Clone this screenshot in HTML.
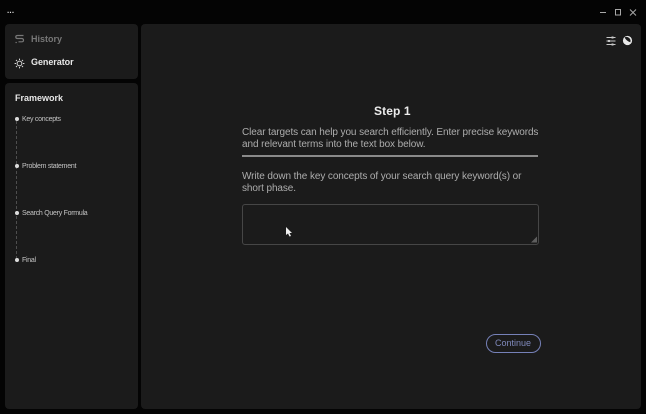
<!DOCTYPE html>
<html>
<head>
<meta charset="utf-8">
<style>
html{margin:0;padding:0;width:646px;height:414px;overflow:hidden;background:#040404;}
body{margin:0;padding:0;width:646px;height:414px;overflow:hidden;background:#040404;font-family:"Liberation Sans",sans-serif;filter:blur(0.3px);}
div,svg,span{position:absolute;}
.card{background:#1b1b1b;border-radius:4px;}
.t{white-space:nowrap;line-height:1;}
.step{color:#c4c4c4;font-size:7px;left:22px;letter-spacing:-0.27px;}
.dot{left:14.5px;width:4px;height:4px;border-radius:50%;background:#dcdcdc;}
.body{color:#adadad;font-size:10px;left:242px;letter-spacing:-0.09px;line-height:12px;height:12px;}
</style>
</head>
<body>
<div class="t" style="left:7px;top:7px;color:#ddd;font-size:8px;font-weight:bold;letter-spacing:0.2px;">...</div>

<svg style="left:596px;top:6px" width="44" height="14" viewBox="0 0 44 14" fill="none" stroke="#a8a8a8" stroke-width="1">
<path d="M4 6.5H10"/>
<rect x="19.5" y="3.5" width="5" height="5.5"/>
<path d="M34 3.5L40 9.5M40 3.5L34 9.5"/>
</svg>

<div class="card" style="left:5px;top:24px;width:133px;height:55px;"></div>
<div class="card" style="left:5px;top:83px;width:133px;height:326px;"></div>
<div class="card" style="left:141px;top:24px;width:500px;height:385px;"></div>

<svg style="left:14px;top:34px" width="11" height="11" viewBox="0 0 11 11" fill="none" stroke="#777" stroke-width="1.2">
<path d="M9.5 1.5H3.5Q1.8 1.5 1.8 3Q1.8 4.5 3.5 4.5H7.5Q9.5 4.5 9.5 6.2Q9.5 7.8 7.5 7.8H4.5"/>
<path d="M1.5 8.5H2.8"/>
</svg>
<div class="t" style="left:31px;top:35px;color:#777;font-size:9px;font-weight:bold;">History</div>

<svg style="left:14px;top:58px" width="11" height="11" viewBox="0 0 11 11" fill="none" stroke="#d8d8d8" stroke-width="1">
<circle cx="5.5" cy="5.5" r="2.4"/>
<path d="M5.5 .6V2M5.5 9V10.4M.6 5.5H2M9 5.5H10.4M2 2L3 3M8 8L9 9M9 2L8 3M3 8L2 9"/>
</svg>
<div class="t" style="left:31px;top:58px;color:#e8e8e8;font-size:9px;font-weight:bold;letter-spacing:-0.05px;">Generator</div>

<div class="t" style="left:15px;top:94px;color:#e8e8e8;font-size:9px;font-weight:bold;">Framework</div>

<div style="left:16px;top:121px;height:138px;border-left:1px dashed #4e4e4e;"></div>
<div class="dot" style="top:117px;"></div>
<div class="dot" style="top:164px;"></div>
<div class="dot" style="top:211px;"></div>
<div class="dot" style="top:258px;"></div>
<div class="t step" style="top:116px;">Key concepts</div>
<div class="t step" style="top:163px;">Problem statement</div>
<div class="t step" style="top:210px;">Search Query Formula</div>
<div class="t step" style="top:257px;">Final</div>

<svg style="left:606px;top:36px" width="10" height="10" viewBox="0 0 10 10" fill="none" stroke="#c8c8c8" stroke-width="1">
<path d="M.5 1.5H9.5M.5 5H9.5M.5 8.5H9.5"/>
<rect x="5.5" y=".5" width="2" height="2" fill="#c8c8c8" stroke="none"/>
<rect x="2" y="4" width="2" height="2" fill="#c8c8c8" stroke="none"/>
<rect x="5.5" y="7.5" width="2" height="2" fill="#c8c8c8" stroke="none"/>
</svg>
<svg style="left:622px;top:35px" width="11" height="11" viewBox="0 0 11 11">
<circle cx="5.5" cy="5.5" r="4.6" fill="#e8e8e8"/>
<path d="M2.5 2.5A4 4 0 0 1 8.3 7.2Q5 6.5 2.5 2.5Z" fill="#1b1b1b"/>
</svg>

<div class="t" style="left:374px;top:105px;color:#ececec;font-size:12px;font-weight:bold;letter-spacing:0.1px;">Step 1</div>
<div class="t body" style="top:127px;">Clear targets can help you search efficiently. Enter precise keywords</div>
<div class="t body" style="top:139px;">and relevant terms into the text box below.</div>
<div style="left:242px;top:155px;width:296px;height:2px;background:#8a8a8a;"></div>
<div class="t body" style="top:171px;">Write down the key concepts of your search query keyword(s) or</div>
<div class="t body" style="top:183px;">short phase.</div>

<div style="left:242px;top:204px;width:295px;height:39px;border:1px solid #464646;border-radius:3px;"></div>
<svg style="left:530px;top:236px" width="8" height="7" viewBox="0 0 8 7"><path d="M7 0.5V6.5H1Z" fill="#5e5e5e"/></svg>

<svg style="left:285px;top:226px" width="8" height="12" viewBox="0 0 8 12"><path d="M1 1V9L3 7.5L4.5 10.5L6 10L4.5 7H7Z" fill="#f0f0f0"/></svg>

<div style="left:486px;top:334px;width:53px;height:17px;border:1px solid #7681b8;border-radius:10px;"></div>
<div class="t" style="left:495px;top:339px;color:#7f89bb;font-size:9px;">Continue</div>
</body>
</html>
